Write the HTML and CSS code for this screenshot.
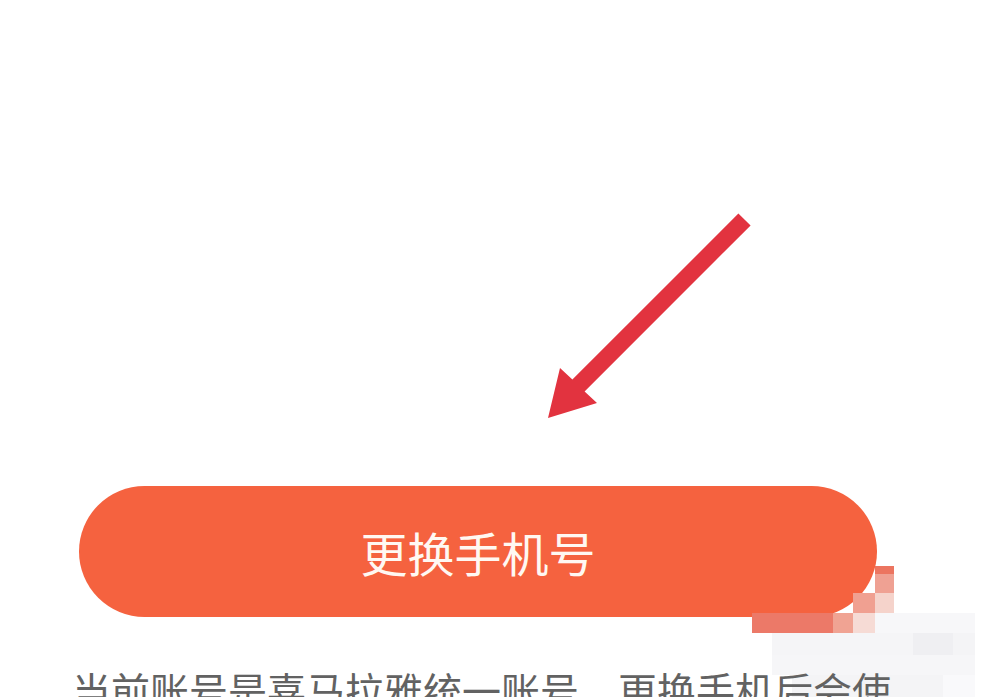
FILE: index.html
```html
<!DOCTYPE html>
<html lang="zh-CN">
<head>
<meta charset="utf-8">
<link rel="stylesheet" href="styles.css">
</head>
<body>
<div class="page">
  <div class="hero">
    <svg class="arrow" width="984" height="486" viewBox="0 0 984 486">
      <polygon fill="#e2333f" points="738.4,213.6 750.6,225.4 584.6,391.4 597,403 548,418 560,368 572.4,379.6"/>
    </svg>
  </div>
  <button class="primary">更换手机号</button>
  <p class="note">当前账号是喜马拉雅统一账号，更换手机后会使用新手机号登录所有喜马拉雅产品</p>
  <div class="mosaic">
    <i class="m" style="left:875px;top:566px;width:19px;height:8px;background:#ec7560"></i>
    <i class="m" style="left:875px;top:574px;width:19px;height:19px;background:#efa193"></i>
    <i class="m" style="left:853px;top:593px;width:22px;height:20px;background:#f0a091"></i>
    <i class="m" style="left:875px;top:593px;width:19px;height:20px;background:#f5d3cb"></i>
    <i class="m" style="left:752px;top:613px;width:81px;height:20px;background:#ec7968"></i>
    <i class="m" style="left:833px;top:613px;width:20px;height:20px;background:#f0a393"></i>
    <i class="m" style="left:853px;top:613px;width:22px;height:20px;background:#f6dbd5"></i>
    <i class="m" style="left:875px;top:613px;width:100px;height:20px;background:#f7f7f9"></i>
    <i class="m" style="left:772px;top:633px;width:141px;height:22px;background:#f5f5f7"></i>
    <i class="m" style="left:913px;top:633px;width:40px;height:22px;background:#efeff2"></i>
    <i class="m" style="left:953px;top:633px;width:22px;height:22px;background:#f4f4f6"></i>
    <i class="m" style="left:772px;top:655px;width:203px;height:20px;background:#f6f6f8"></i>
    <i class="m" style="left:792px;top:675px;width:151px;height:22px;background:#f4f4f6"></i>
    <i class="m" style="left:943px;top:675px;width:32px;height:22px;background:#f9f9fb"></i>
  </div>
</div>
</body>
</html>
```

FILE: styles.css
```css
html, body {
  margin: 0;
  padding: 0;
  background: #ffffff;
  overflow: hidden;
}
.page {
  position: relative;
  width: 984px;
  height: 697px;
  overflow: hidden;
  font-family: "Noto Sans CJK SC", "Noto Sans", sans-serif;
}
.hero {
  height: 486px;
}
.arrow {
  display: block;
}
.primary {
  display: flex;
  align-items: center;
  justify-content: center;
  margin: 0 0 0 79px;
  width: 798px;
  height: 131px;
  border: none;
  border-radius: 66px;
  background: #f5623f;
  color: #fff8f2;
  font-family: "Noto Sans CJK SC", "Noto Sans", sans-serif;
  font-size: 47px;
  font-weight: 400;
  letter-spacing: 0;
  padding: 0;
}
.note {
  position: relative;
  z-index: 1;
  margin: 44px 0 0 72px;
  width: 840px;
  font-size: 39px;
  line-height: 56px;
  color: #626262;
}
.mosaic {
  position: absolute;
  inset: 0;
  pointer-events: none;
}
.m {
  position: absolute;
  display: block;
}
```
